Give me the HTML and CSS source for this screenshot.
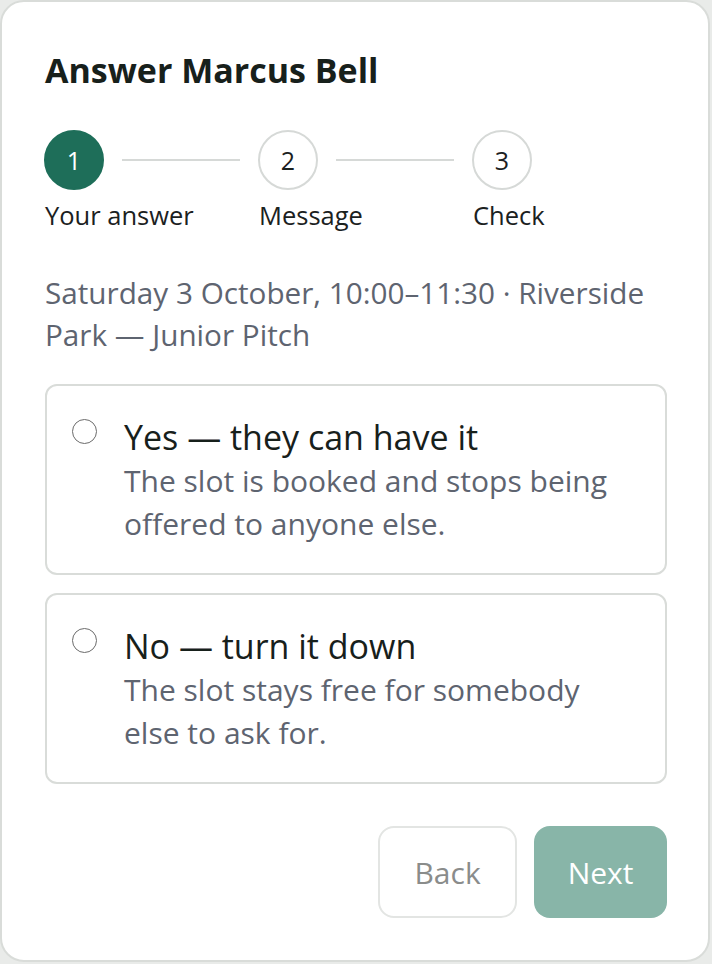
FILE: index.html
```html
<!DOCTYPE html>
<html lang="en">
<head>
    <meta charset="UTF-8">
    <meta name="viewport" content="width=device-width, initial-scale=1.0">
    <title>Answer Marcus Bell</title>
    <link rel="stylesheet" href="styles.css">
</head>
<body>
    <div class="card">
        <h1>Answer Marcus Bell</h1>

        <div class="steps">
            <div class="step active">
                <div class="step-row">
                    <span class="dot">1</span>
                    <span class="line"></span>
                </div>
                <span class="step-label">Your answer</span>
            </div>
            <div class="step">
                <div class="step-row">
                    <span class="dot">2</span>
                    <span class="line"></span>
                </div>
                <span class="step-label">Message</span>
            </div>
            <div class="step last">
                <div class="step-row">
                    <span class="dot">3</span>
                </div>
                <span class="step-label">Check</span>
            </div>
        </div>

        <p class="slot">Saturday 3 October, 10:00–11:30 · Riverside Park — Junior Pitch</p>

        <div class="options">
            <label class="option">
                <input type="radio" name="answer" value="yes">
                <span class="option-text">
                    <span class="option-title">Yes — they can have it</span>
                    <span class="option-desc">The slot is booked and stops being offered to anyone else.</span>
                </span>
            </label>
            <label class="option">
                <input type="radio" name="answer" value="no">
                <span class="option-text">
                    <span class="option-title">No — turn it down</span>
                    <span class="option-desc">The slot stays free for somebody else to ask for.</span>
                </span>
            </label>
        </div>

        <div class="actions">
            <button type="button" class="btn btn-back">Back</button>
            <button type="button" class="btn btn-next" disabled>Next</button>
        </div>
    </div>
</body>
</html>
```

FILE: styles.css
```css
html {
    background: #e9ebe9;
}
body {
    margin: 0;
    font-family: "Open Sans", "Noto Sans", sans-serif;
    color: #1b211e;
}
.card {
    box-sizing: border-box;
    width: 710px;
    height: 962px;
    background: #fff;
    border: 2px solid #d9dcd9;
    border-radius: 24px;
    padding: 48px 41px 0 43px;
}
h1 {
    margin: 0;
    font-size: 34px;
    font-weight: 700;
    line-height: 40px;
    color: #17201b;
}
.steps {
    display: flex;
    margin-top: 40px;
    margin-left: -1px;
}
.step {
    width: 214px;
    flex-shrink: 0;
    display: flex;
    flex-direction: column;
}
.step.last {
    width: auto;
}
.step-row {
    display: flex;
    align-items: center;
}
.dot {
    box-sizing: border-box;
    width: 60px;
    height: 60px;
    border-radius: 50%;
    border: 2px solid #d6d9d7;
    display: flex;
    align-items: center;
    justify-content: center;
    font-size: 25px;
    color: #1b211e;
}
.step.active .dot {
    background: #1e6e59;
    border-color: #1e6e59;
    color: #fff;
}
.line {
    width: 118px;
    height: 2px;
    background: #d6d9d7;
    margin-left: 18px;
}
.step-label {
    margin-top: 8px;
    margin-left: 1px;
    font-size: 25.5px;
    line-height: 34px;
}
.slot {
    margin: 40px 0 0 0;
    font-size: 29.7px;
    line-height: 42px;
    color: #5e6470;
}
.options {
    display: flex;
    flex-direction: column;
    gap: 18px;
    margin-top: 28px;
}
.option {
    display: flex;
    align-items: flex-start;
    border: 2px solid #d9dcd9;
    border-radius: 12px;
    padding: 29px 24px 28px 26px;
}
.option input {
    appearance: none;
    width: 25px;
    height: 25px;
    margin: 4px 27px 0 -1px;
    border: 1.5px solid #6b6b6b;
    border-radius: 50%;
    flex-shrink: 0;
}
.option-text {
    display: flex;
    flex-direction: column;
}
.option-title {
    font-size: 34px;
    line-height: 44px;
    color: #17201b;
}
.option-desc {
    font-size: 30px;
    line-height: 43px;
    color: #5e6470;
}
.actions {
    display: flex;
    justify-content: flex-end;
    gap: 17px;
    margin-top: 42px;
}
.btn {
    height: 92px;
    border-radius: 16px;
    font-family: inherit;
    font-size: 30px;
}
.btn-back {
    background: #fff;
    border: 2px solid #e3e5e3;
    color: #8a8c8b;
    padding: 0 34.5px;
}
.btn-next {
    background: #88b5a8;
    border: none;
    color: #fff;
    padding: 0 33.5px;
}
```
